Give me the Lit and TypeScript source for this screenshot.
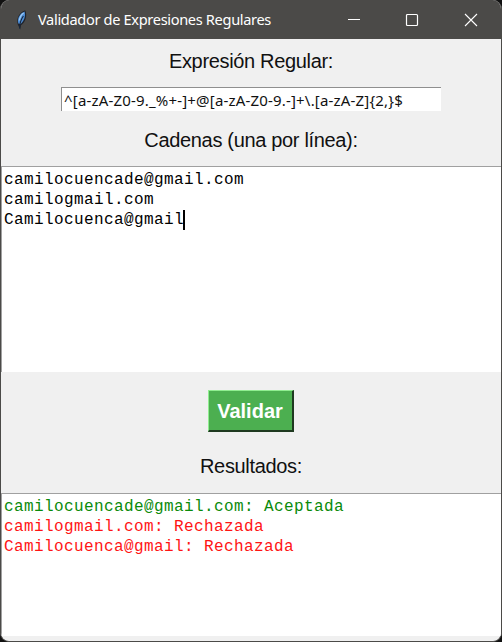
import { LitElement, html, css } from "lit";
import { customElement, property } from "lit/decorators.js";

@customElement("title-bar")
class TitleBar extends LitElement {
  @property() heading = "";

  static styles = css`
    :host {
      display: flex;
      align-items: center;
      height: 39px;
      box-sizing: border-box;
      padding-left: 13px;
      background: #4b4a48;
      color: #fff;
      font: 14.6px/20px "Noto Sans", "Open Sans", sans-serif;
    }
    .feather {
      width: 16px;
      height: 20px;
      margin-right: 8px;
      flex: none;
    }
    .heading {
      flex: 1;
      padding-bottom: 2px;
      white-space: nowrap;
      letter-spacing: -0.34px;
    }
    .control {
      width: 58px;
      display: flex;
      justify-content: center;
      flex: none;
    }
    .control.last {
      width: 60px;
    }
    .control svg {
      width: 14px;
      height: 14px;
      fill: none;
      stroke: #fff;
    }
  `;

  render() {
    return html`
      <svg class="feather" viewBox="0 0 16 20">
        <path d="M5 17C1.4 11 3.6 3 11.2 .2 13.6 5.6 11.4 12.5 7 15.2L6.2 19.4z" fill="#20242c" />
        <path d="M4.3 13.5C2.9 8.6 5.6 3.8 10.6 1.6 12 6 9.8 11.4 6.6 14z" fill="#4b8bd4" />
        <path d="M5.4 10.5C5.8 7.2 7.3 4.6 9.6 3" fill="none" stroke="#9cc8f2" stroke-width="1.4" />
        <path d="M5.6 18.6C5.6 14 7 9.4 9.4 6" fill="none" stroke="#17263c" stroke-width="1.1" />
      </svg>
      <span class="heading">${this.heading}</span>
      <span class="control"><svg viewBox="0 0 14 14"><path d="M1 6.5h12" /></svg></span>
      <span class="control"><svg viewBox="0 0 14 14"><rect x="1.5" y="1.5" width="11" height="11" rx="1" stroke-width="1.2" /></svg></span>
      <span class="control last"><svg viewBox="0 0 14 14"><path d="M1 1l12 12M13 1L1 13" stroke-width="1.1" /></svg></span>
    `;
  }
}

@customElement("app-root")
class AppRoot extends LitElement {
  private pattern = "^[a-zA-Z0-9._%+-]+@[a-zA-Z0-9.-]+\\.[a-zA-Z]{2,}$";
  private lines = ["camilocuencade@gmail.com", "camilogmail.com", "Camilocuenca@gmail"];

  static styles = css`
    :host {
      display: block;
      height: 642px;
      background: #111;
    }
    .window {
      height: 642px;
      box-sizing: border-box;
      display: flex;
      flex-direction: column;
      border: solid #4b4a48;
      border-width: 0 1px 1px;
      border-radius: 9px;
      overflow: hidden;
      background: #f0f0f0;
      font-family: "Liberation Sans", Arial, sans-serif;
    }
    .label {
      text-align: center;
      font-size: 20px;
      line-height: 24px;
      letter-spacing: -0.33px;
      color: #111;
      white-space: nowrap;
    }
    .expression {
      margin-top: 10px;
    }
    .entry {
      width: 380px;
      height: 24px;
      box-sizing: border-box;
      margin: 14px auto 0;
      padding-left: 2px;
      border-top: 1px solid #8f8f8f;
      border-left: 1px solid #8f8f8f;
      background: #fff;
      color: #111;
      font: 15px/24px "Noto Sans", "Open Sans", sans-serif;
      letter-spacing: 0.18px;
      white-space: pre;
    }
    .strings {
      margin-top: 17px;
    }
    .box {
      box-sizing: border-box;
      border-top: 1px solid #a0a0a0;
      border-left: 1px solid #a0a0a0;
      padding: 3px 0 0 2px;
      background: #fff;
      color: #000;
      font: 16px/20px "Liberation Mono", "Courier New", monospace;
      letter-spacing: 0.4px;
      white-space: pre;
    }
    .input {
      height: 206px;
      margin-top: 14px;
    }
    .output {
      height: 143px;
      margin-top: 15px;
    }
    .caret {
      display: inline-block;
      width: 2px;
      height: 20px;
      margin-left: -1px;
      vertical-align: top;
      background: #000;
    }
    .validate {
      display: block;
      box-sizing: border-box;
      width: 86px;
      height: 42px;
      margin: 18px auto 0;
      padding: 0 1px 0 0;
      border: solid;
      border-width: 1px 2px 2px 1px;
      border-color: #90ee90 #1f3a20 #1f3a20 #90ee90;
      border-radius: 0;
      background: #4caf50;
      color: #fff;
      font: bold 20px/38px "Liberation Sans", Arial, sans-serif;
    }
    .results {
      margin-top: 22px;
    }
    .ok {
      color: #0a8a0a;
    }
    .bad {
      color: #ff1414;
    }
  `;

  render() {
    const test = new RegExp(this.pattern);
    return html`
      <div class="window">
        <title-bar heading="Validador de Expresiones Regulares"></title-bar>
        <div class="label expression">Expresión Regular:</div>
        <div class="entry">${this.pattern}</div>
        <div class="label strings">Cadenas (una por línea):</div>
        <div class="box input">${this.lines.map(
          (line, i) => html`<div>${line}${i === this.lines.length - 1 ? html`<span class="caret"></span>` : ""}</div>`
        )}</div>
        <button class="validate">Validar</button>
        <div class="label results">Resultados:</div>
        <div class="box output">${this.lines.map((line) => {
          const ok = test.test(line);
          return html`<div class=${ok ? "ok" : "bad"}>${line}: ${ok ? "Aceptada" : "Rechazada"}</div>`;
        })}</div>
      </div>
    `;
  }
}
